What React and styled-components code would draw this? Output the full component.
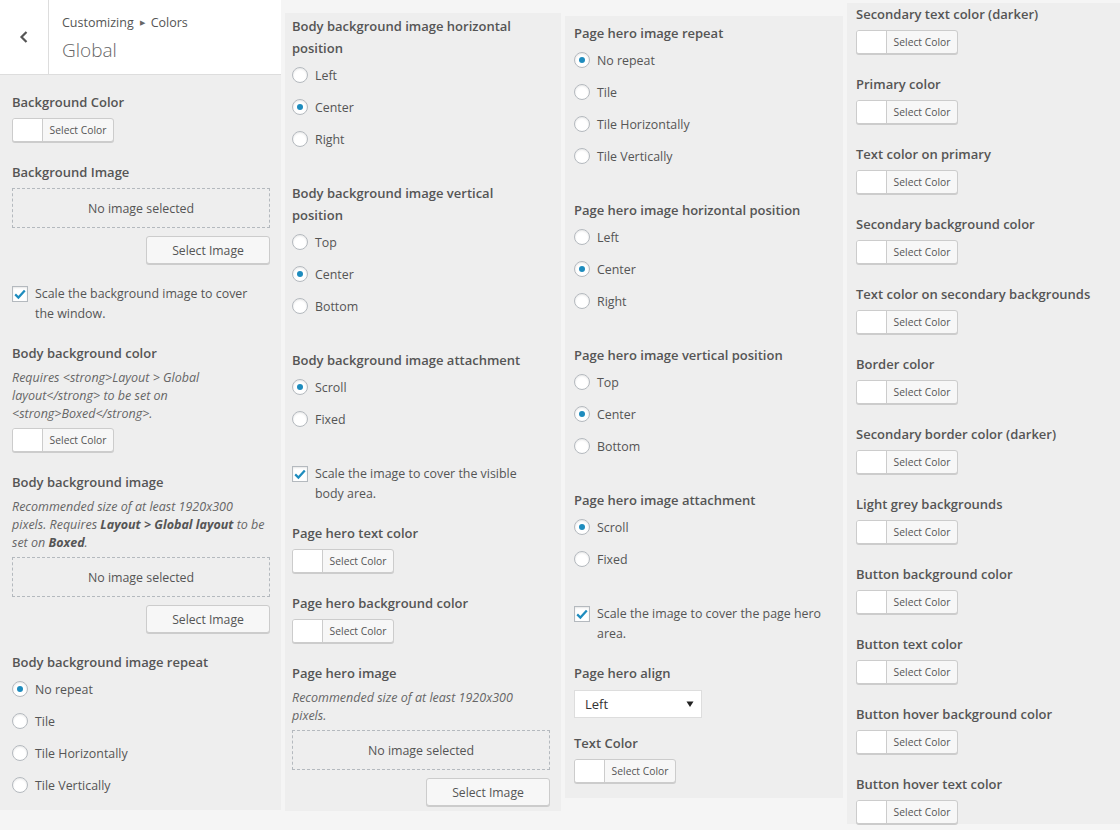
import React from "react";
import styled, { createGlobalStyle } from "styled-components";

const GlobalStyle = createGlobalStyle`
  *, *::before, *::after {
    box-sizing: border-box;
  }

  html,
  body {
    margin: 0;
    padding: 0;
    background: #f5f5f5;
  }

  body {
    font-family: "Open Sans", "Noto Sans", sans-serif;
    color: #555;
  }
`;

const Page = styled.div`
  display: flex;
  align-items: flex-start;
  gap: 4px;
  width: 1120px;
  height: 830px;
  overflow: hidden;
`;

const Panel = styled.div`
  flex: 0 0 ${(p) => p.$width}px;
  margin-top: ${(p) => p.$top || 0}px;
  background: #eee;
`;

const Section = styled.div`
  padding: ${(p) => `${p.$pt}px ${p.$pr}px ${p.$pb}px ${p.$pl}px`};
`;

const Header = styled.div`
  display: flex;
  height: 75px;
  background: #fff;
  border-bottom: 1px solid #ddd;
`;

const BackButton = styled.button`
  display: flex;
  align-items: center;
  justify-content: center;
  width: 49px;
  padding: 0;
  border: none;
  border-right: 1px solid #ddd;
  background: #fff;
`;

const HeaderText = styled.div`
  padding: 13px 0 0 13px;
`;

const Breadcrumb = styled.div`
  font-size: 12.5px;
  line-height: 20px;
  color: #555;

  span {
    font-size: 7px;
    margin: 0 6px;
    color: #666;
    vertical-align: 2px;
  }
`;

const HeaderTitle = styled.div`
  margin-top: 3px;
  font-size: 19px;
  font-weight: 300;
  line-height: 28px;
  color: #666;
`;

const Control = styled.div`
  margin-bottom: ${(p) => (p.$space != null ? p.$space : 19)}px;

  &:last-child {
    margin-bottom: 0;
  }
`;

const Title = styled.div`
  font-size: 13px;
  font-weight: 600;
  line-height: 22px;
  color: #555;
  white-space: nowrap;
`;

const Description = styled.div`
  margin-top: 5px;
  font-size: 12.5px;
  font-style: italic;
  line-height: 18px;
  color: #666;
  white-space: nowrap;

  b {
    font-weight: 700;
    color: #555;
  }
`;

const ColorButton = styled.button`
  display: flex;
  margin-top: 5px;
  width: 102px;
  height: 24px;
  padding: 0;
  border: 1px solid #ccc;
  border-radius: 3px;
  background: #f7f7f7;
  box-shadow: 0 1px 0 #ccc;
  overflow: hidden;
  font-family: inherit;
`;

const Swatch = styled.span`
  width: 30px;
  height: 100%;
  background: #fff;
  border-right: 1px solid #ccc;
`;

const ColorText = styled.span`
  flex: 1;
  font-size: 10.3px;
  line-height: 22px;
  color: #555;
  text-align: center;
`;

const Placeholder = styled.div`
  display: flex;
  align-items: center;
  justify-content: center;
  margin-top: 5px;
  height: 40px;
  border: 1px dashed #b4b9be;
  font-size: 12.4px;
  color: #555;
`;

const ButtonRow = styled.div`
  display: flex;
  justify-content: flex-end;
  margin-top: 8px;
`;

const ImageButton = styled.button`
  width: 124px;
  height: 28px;
  padding: 0;
  border: 1px solid #ccc;
  border-radius: 3px;
  background: #f7f7f7;
  box-shadow: 0 1px 0 #ccc;
  font-family: inherit;
  font-size: 12.2px;
  color: #555;
`;

const RadioList = styled.div`
  padding-bottom: 8px;
`;

const Choice = styled.label`
  display: flex;
  align-items: center;
  gap: 7px;
  height: 32px;
  font-size: 12.4px;
  color: #555;
`;

const Radio = styled.span`
  display: flex;
  align-items: center;
  justify-content: center;
  flex: 0 0 16px;
  height: 16px;
  border: 1px solid #b4b9be;
  border-radius: 50%;
  background: #fff;
  box-shadow: inset 0 1px 2px rgba(0, 0, 0, 0.1);

  &::after {
    content: "";
    display: ${(p) => (p.$checked ? "block" : "none")};
    width: 6px;
    height: 6px;
    border-radius: 50%;
    background: #1e8cbe;
  }
`;

const CheckRow = styled.label`
  display: flex;
  align-items: flex-start;
  gap: 7px;
  padding-top: ${(p) => p.$offset}px;
  font-size: 12.4px;
  line-height: 20px;
  color: #555;
  white-space: nowrap;
`;

const CheckBox = styled.span`
  display: flex;
  align-items: center;
  justify-content: center;
  flex: 0 0 16px;
  height: 16px;
  margin-top: 2px;
  border: 1px solid #b4b9be;
  background: #fff;
  box-shadow: inset 0 1px 2px rgba(0, 0, 0, 0.1);
`;

const SelectBox = styled.div`
  display: flex;
  align-items: center;
  justify-content: space-between;
  margin-top: 6px;
  width: 128px;
  height: 28px;
  padding: 0 7px 0 10px;
  border: 1px solid #ddd;
  background: #fff;
  font-size: 13px;
  color: #333;
`;

const Check = () => (
  <svg width="14" height="14" viewBox="0 0 14 14">
    <path d="M2.2 7.4 L5.4 10.6 L11.8 3.4" fill="none" stroke="#1e8cbe" strokeWidth="2.2" />
  </svg>
);

const ColorControl = ({ title, description }) => (
  <Control>
    <Title>{title}</Title>
    {description && <Description>{description}</Description>}
    <ColorButton type="button">
      <Swatch />
      <ColorText>Select Color</ColorText>
    </ColorButton>
  </Control>
);

const ImageControl = ({ title, description, space }) => (
  <Control $space={space}>
    <Title>{title}</Title>
    {description && <Description>{description}</Description>}
    <Placeholder>No image selected</Placeholder>
    <ButtonRow>
      <ImageButton type="button">Select Image</ImageButton>
    </ButtonRow>
  </Control>
);

const RadioControl = ({ title, options, selected }) => (
  <Control>
    <Title>{title}</Title>
    <RadioList>
      {options.map((option) => (
        <Choice key={option}>
          <Radio $checked={option === selected} />
          {option}
        </Choice>
      ))}
    </RadioList>
  </Control>
);

const CheckControl = ({ children, offset = 2 }) => (
  <Control $space={18}>
    <CheckRow $offset={offset}>
      <CheckBox>
        <Check />
      </CheckBox>
      <span>{children}</span>
    </CheckRow>
  </Control>
);

const repeatOptions = ["No repeat", "Tile", "Tile Horizontally", "Tile Vertically"];
const horizontalOptions = ["Left", "Center", "Right"];
const verticalOptions = ["Top", "Center", "Bottom"];
const attachmentOptions = ["Scroll", "Fixed"];

const themeColors = [
  "Secondary text color (darker)",
  "Primary color",
  "Text color on primary",
  "Secondary background color",
  "Text color on secondary backgrounds",
  "Border color",
  "Secondary border color (darker)",
  "Light grey backgrounds",
  "Button background color",
  "Button text color",
  "Button hover background color",
  "Button hover text color",
];

const App = () => {
  return (
    <>
      <GlobalStyle />
      <Page>
        <Panel $width={281}>
          <Header>
            <BackButton type="button" aria-label="Back">
              <svg width="12" height="14" viewBox="0 0 12 14">
                <polyline points="8.5,2 3.5,7 8.5,12" fill="none" stroke="#555" strokeWidth="2.2" />
              </svg>
            </BackButton>
            <HeaderText>
              <Breadcrumb>
                Customizing<span>▶</span>Colors
              </Breadcrumb>
              <HeaderTitle>Global</HeaderTitle>
            </HeaderText>
          </Header>
          <Section $pt={16} $pr={11} $pb={1} $pl={12}>
            <ColorControl title="Background Color" />
            <ImageControl title="Background Image" />
            <CheckControl offset={1}>
              Scale the background image to cover
              <br />
              the window.
            </CheckControl>
            <ColorControl
              title="Body background color"
              description={
                <>
                  {"Requires <strong>Layout > Global"}
                  <br />
                  {"layout</strong> to be set on"}
                  <br />
                  {"<strong>Boxed</strong>."}
                </>
              }
            />
            <ImageControl
              space={18}
              title="Body background image"
              description={
                <>
                  Recommended size of at least 1920x300
                  <br />
                  pixels. Requires <b>Layout &gt; Global layout</b> to be
                  <br />
                  set on <b>Boxed</b>.
                </>
              }
            />
            <RadioControl title="Body background image repeat" options={repeatOptions} selected="No repeat" />
          </Section>
        </Panel>

        <Panel $width={276} $top={13}>
          <Section $pt={2} $pr={11} $pb={5} $pl={7}>
            <RadioControl
              title={
                <>
                  Body background image horizontal
                  <br />
                  position
                </>
              }
              options={horizontalOptions}
              selected="Center"
            />
            <RadioControl
              title={
                <>
                  Body background image vertical
                  <br />
                  position
                </>
              }
              options={verticalOptions}
              selected="Center"
            />
            <RadioControl title="Body background image attachment" options={attachmentOptions} selected="Scroll" />
            <CheckControl>
              Scale the image to cover the visible
              <br />
              body area.
            </CheckControl>
            <ColorControl title="Page hero text color" />
            <ColorControl title="Page hero background color" />
            <ImageControl
              title="Page hero image"
              description={
                <>
                  Recommended size of at least 1920x300
                  <br />
                  pixels.
                </>
              }
            />
          </Section>
        </Panel>

        <Panel $width={278} $top={16}>
          <Section $pt={6} $pr={10} $pb={15} $pl={9}>
            <RadioControl title="Page hero image repeat" options={repeatOptions} selected="No repeat" />
            <RadioControl title="Page hero image horizontal position" options={horizontalOptions} selected="Center" />
            <RadioControl title="Page hero image vertical position" options={verticalOptions} selected="Center" />
            <RadioControl title="Page hero image attachment" options={attachmentOptions} selected="Scroll" />
            <CheckControl>
              Scale the image to cover the page hero
              <br />
              area.
            </CheckControl>
            <Control $space={14}>
              <Title>Page hero align</Title>
              <SelectBox>
                Left
                <svg width="8" height="8" viewBox="0 0 8 8">
                  <polygon points="0.5,1.5 7.5,1.5 4,7" fill="#222" />
                </svg>
              </SelectBox>
            </Control>
            <ColorControl title="Text Color" />
          </Section>
        </Panel>

        <Panel $width={273} $top={3}>
          <Section $pt={0} $pr={10} $pb={0} $pl={9}>
            {themeColors.map((title) => (
              <ColorControl key={title} title={title} />
            ))}
          </Section>
        </Panel>
      </Page>
    </>
  );
};

export default App;
